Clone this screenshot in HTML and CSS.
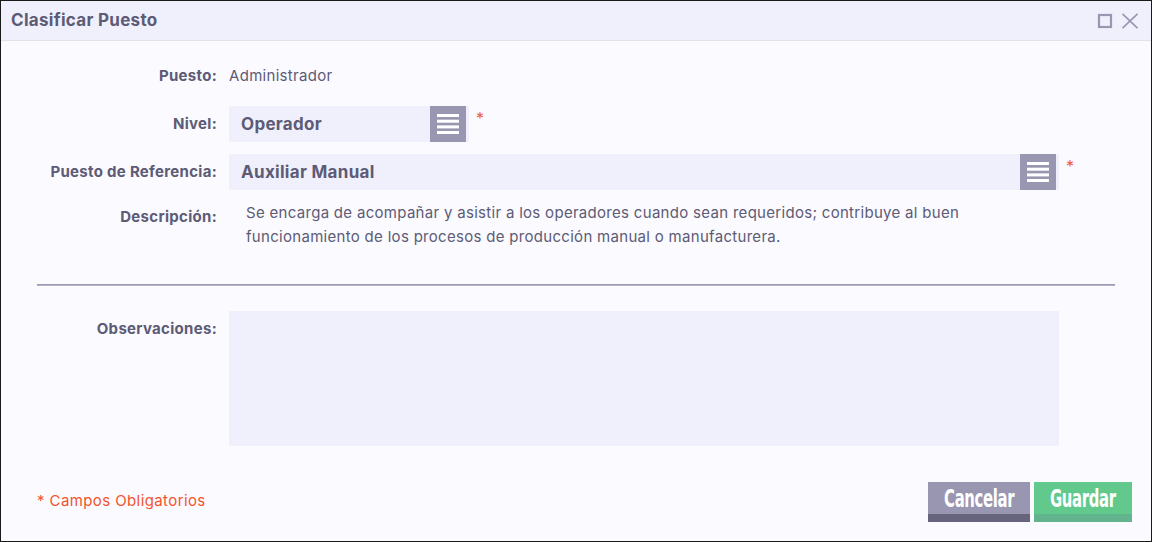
FILE: index.html
```html
<!DOCTYPE html>
<html lang="es">
<head>
<meta charset="utf-8">
<title>Clasificar Puesto</title>
<link rel="stylesheet" href="styles.css">
</head>
<body>
<div class="dialog">
  <div class="header">
    <h1 class="title">Clasificar Puesto</h1>
    <div class="win-actions">
      <svg class="win-icon" width="16" height="16" viewBox="0 0 16 16"><rect x="2" y="2" width="12" height="12" fill="none" stroke="#9896b0" stroke-width="2.2"/></svg>
      <svg class="win-icon" width="18" height="16" viewBox="0 0 18 16"><path d="M1.5 0.8 L16.5 15.2 M16.5 0.8 L1.5 15.2" stroke="#9896b0" stroke-width="1.7" fill="none"/></svg>
    </div>
  </div>
  <div class="body">
    <div class="form">
      <div class="label lbl-text">Puesto:</div>
      <div class="value-text">Administrador</div>

      <div class="label lbl-field">Nivel:</div>
      <div class="field-row">
        <div class="select select-short">
          <span class="select-text">Operador</span>
          <span class="select-btn"><svg width="22" height="20" viewBox="0 0 22 20"><rect x="0" y="0" width="22" height="3" fill="#fff"/><rect x="0" y="5.7" width="22" height="3" fill="#fff"/><rect x="0" y="11.4" width="22" height="3" fill="#fff"/><rect x="0" y="17" width="22" height="3" fill="#fff"/></svg></span>
        </div>
        <span class="req">*</span>
      </div>

      <div class="label lbl-field">Puesto de Referencia:</div>
      <div class="field-row">
        <div class="select select-long">
          <span class="select-text">Auxiliar Manual</span>
          <span class="select-btn"><svg width="22" height="20" viewBox="0 0 22 20"><rect x="0" y="0" width="22" height="3" fill="#fff"/><rect x="0" y="5.7" width="22" height="3" fill="#fff"/><rect x="0" y="11.4" width="22" height="3" fill="#fff"/><rect x="0" y="17" width="22" height="3" fill="#fff"/></svg></span>
        </div>
        <span class="req">*</span>
      </div>

      <div class="label lbl-desc">Descripción:</div>
      <div class="desc">Se encarga de acompañar y asistir a los operadores cuando sean requeridos; contribuye al buen<br>funcionamiento de los procesos de producción manual o manufacturera.</div>
    </div>

    <hr class="sep">

    <div class="form form-obs">
      <div class="label lbl-obs">Observaciones:</div>
      <div class="textarea"></div>
    </div>

    <div class="footer">
      <span class="required-note">* Campos Obligatorios</span>
      <div class="buttons">
        <button class="btn btn-cancel"><span>Cancelar</span></button>
        <button class="btn btn-save"><span>Guardar</span></button>
      </div>
    </div>
  </div>
</div>
</body>
</html>
```

FILE: styles.css
```css
* { box-sizing: border-box; }
html, body { margin: 0; padding: 0; }
body {
  width: 1152px;
  height: 542px;
  font-family: Inter, Roboto, "Liberation Sans", sans-serif;
  letter-spacing: 0.3px;
  color: #5d5b75;
  background: #fafaff;
}
.dialog {
  width: 1152px;
  height: 542px;
  border: 1px solid #1a1a1a;
  background: #fafaff;
  display: flex;
  flex-direction: column;
}
.header {
  height: 40px;
  background: #f0f0fc;
  border-bottom: 1px solid #e2e2ea;
  display: flex;
  align-items: center;
  justify-content: space-between;
  padding: 0 12px 0 10px;
}
.title {
  margin: 0;
  font-size: 17px;
  font-weight: 700;
  color: #5d5b75;
  padding-bottom: 2px;
}
.win-actions { display: flex; align-items: center; gap: 8px; }
.win-icon { display: block; }
.body {
  flex: 1;
  display: flex;
  flex-direction: column;
}
.form {
  display: grid;
  grid-template-columns: 216px 1fr;
  column-gap: 12px;
  padding-top: 23px;
}
.label {
  text-align: right;
  font-size: 15px;
  font-weight: 700;
  line-height: 24px;
  color: #5d5b75;
}
.value-text {
  font-size: 15px;
  line-height: 24px;
  color: #5d5b75;
}
.lbl-field { align-self: center; }
.field-row { display: flex; align-items: flex-start; }
.lbl-field, .field-row { margin-top: 18px; }
.form > .lbl-field ~ .lbl-field, .form > .field-row ~ .field-row { margin-top: 12px; }
.select {
  height: 36px;
  background: #f0f0fc;
  display: flex;
  align-items: center;
  justify-content: space-between;
  padding: 0 3px 0 12px;
}
.select-short { width: 240px; }
.select-long { width: 830px; }
.select-text {
  font-size: 17px;
  font-weight: 700;
  color: #5d5b75;
}
.select-btn {
  width: 36px;
  height: 36px;
  background: #9896b0;
  display: flex;
  align-items: center;
  justify-content: center;
}
.select-btn svg { display: block; }
.req {
  color: #f25c3c;
  font-size: 16px;
  margin-left: 7px;
  line-height: 20px;
  padding-top: 2px;
}
.lbl-desc { margin-top: 15px; }
.desc {
  margin-top: 11px;
  padding-left: 17px;
  font-size: 15px;
  line-height: 24px;
  color: #5d5b75;
}
.sep {
  margin: 35px 36px 0 36px;
  border: 0;
  height: 2px;
  background: linear-gradient(#9c9ab2 0 50%, #b4b2c8 50% 100%);
}
.form-obs { padding-top: 25px; }
.lbl-obs { padding-top: 6px; }
.textarea {
  width: 830px;
  height: 135px;
  background: #f0f0fc;
}
.footer {
  display: flex;
  align-items: center;
  justify-content: space-between;
  padding: 36px 19px 0 36px;
}
.required-note {
  color: #f2542e;
  font-size: 15px;
  letter-spacing: 0.4px;
  padding-bottom: 4px;
}
.buttons { display: flex; gap: 4px; }
.btn {
  border: 0;
  padding: 0;
  margin: 0;
  height: 40px;
  color: #fff;
  font-family: "DejaVu Sans Condensed", "Liberation Sans Narrow", sans-serif;
  font-weight: 700;
  font-size: 25px;
  letter-spacing: -0.5px;
  display: flex;
  align-items: center;
  justify-content: center;
  padding-bottom: 8px;
}
.btn span { display: inline-block; transform: scaleX(0.66); white-space: nowrap; }
.btn-cancel {
  width: 102px;
  background: #9896b0;
  box-shadow: inset 0 -8px 0 #67657e;
}
.btn-save {
  width: 98px;
  background: #62c98c;
  box-shadow: inset 0 -8px 0 #62b48e;
}
```
